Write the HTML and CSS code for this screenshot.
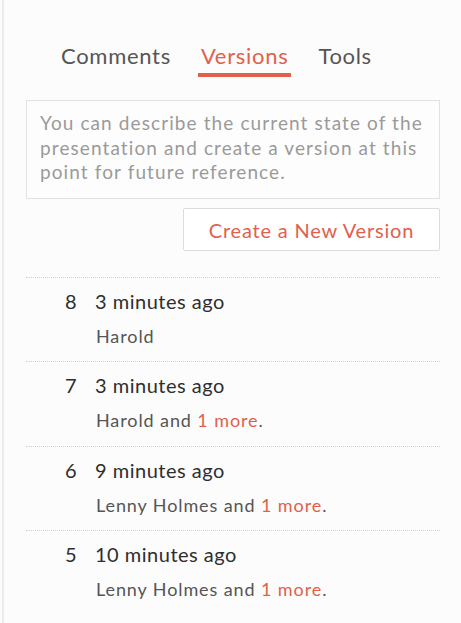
FILE: index.html
```html
<!DOCTYPE html>
<html>
<head>
<meta charset="utf-8">
<link rel="stylesheet" href="styles.css">
</head>
<body>
<div class="panel">
  <nav class="tabs">
    <span class="tab">Comments</span>
    <span class="tab active">Versions</span>
    <span class="tab">Tools</span>
  </nav>
  <div class="desc">You can describe the current state of the presentation and create a version at this point for future reference.</div>
  <div class="actions"><button class="btn">Create a New Version</button></div>
  <ul class="versions">
    <li class="version">
      <div class="head"><span class="num">8</span><span class="time">3 minutes ago</span></div>
      <div class="who">Harold</div>
    </li>
    <li class="version">
      <div class="head"><span class="num">7</span><span class="time">3 minutes ago</span></div>
      <div class="who">Harold and <a class="more">1 more</a>.</div>
    </li>
    <li class="version">
      <div class="head"><span class="num">6</span><span class="time">9 minutes ago</span></div>
      <div class="who">Lenny Holmes and <a class="more">1 more</a>.</div>
    </li>
    <li class="version">
      <div class="head"><span class="num">5</span><span class="time">10 minutes ago</span></div>
      <div class="who">Lenny Holmes and <a class="more">1 more</a>.</div>
    </li>
  </ul>
</div>
</body>
</html>
```

FILE: styles.css
```css
html, body {
  margin: 0;
  padding: 0;
  background: #fcfcfc;
  font-family: Lato, "Open Sans", sans-serif;
}
.panel {
  margin-left: 2px;
  border-left: 2px solid #ebebeb;
  min-height: 623px;
  box-sizing: border-box;
  padding: 0 21px 0 22px;
}
.tabs {
  display: flex;
  gap: 30px;
  padding: 41px 0 0 35px;
  height: 37px;
  font-size: 22px;
  letter-spacing: 0.7px;
}
.tab {
  color: #555;
  height: 36px;
  padding: 0 3px;
  margin: 0 -3px;
  line-height: 30px;
  box-sizing: border-box;
}
.tab.active {
  color: #e2604b;
  border-bottom: 4px solid #e2604b;
}
.desc {
  margin-top: 22px;
  border: 1px solid #e2e2e2;
  background: #fdfdfd;
  padding: 10px 13px 12px;
  font-size: 19px;
  letter-spacing: 1.1px;
  line-height: 24.5px;
  color: #9a9a9a;
  height: 99px;
  box-sizing: border-box;
}
.actions {
  display: flex;
  justify-content: flex-end;
  margin-top: 9px;
}
.btn {
  width: 257px;
  height: 43px;
  border: 1px solid #dcdcdc;
  background: #fff;
  border-radius: 2px;
  color: #e2604b;
  font-family: inherit;
  font-size: 20px;
  letter-spacing: 0.8px;
  padding: 0;
}
.versions {
  list-style: none;
  margin: 26px 0 0;
  padding: 0;
}
.version {
  border-top: 1px dotted #d2d2d2;
  height: 84.3px;
  padding-left: 39px;
  box-sizing: border-box;
}
.head {
  display: flex;
  align-items: baseline;
  padding-top: 11px;
  font-size: 20px;
  letter-spacing: 0.5px;
  line-height: 24px;
  color: #2e2e2e;
}
.num {
  width: 30px;
}
.who {
  margin-top: 12px;
  padding-left: 31px;
  font-size: 18px;
  letter-spacing: 0.9px;
  line-height: 22px;
  color: #555;
}
.more {
  color: #e2604b;
}
```
